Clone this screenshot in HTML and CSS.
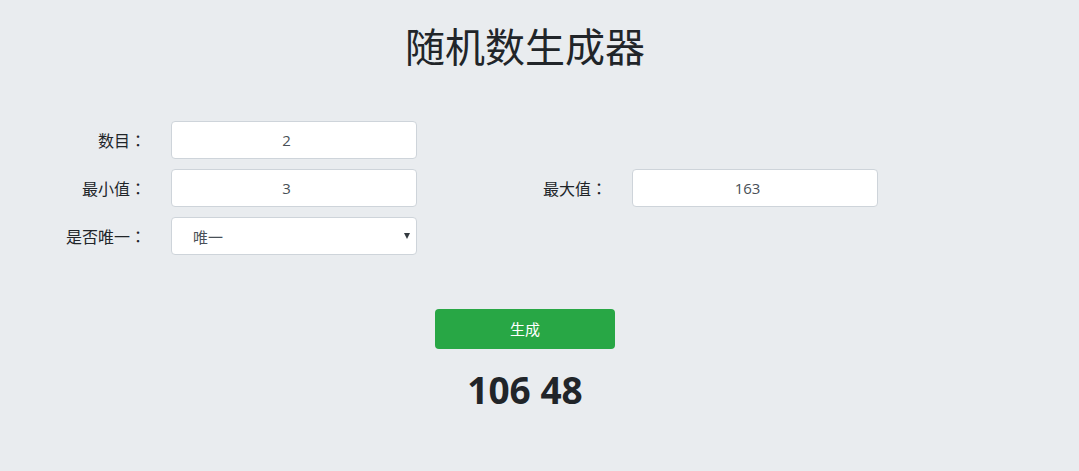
FILE: index.html
```html
<!DOCTYPE html>
<html lang="zh-CN">
<head>
<meta charset="utf-8">
<title>随机数生成器</title>
<link rel="stylesheet" href="styles.css">
</head>
<body>
<div class="page">
  <h1 class="title">随机数生成器</h1>
  <form class="form">
    <label class="label" for="count">数目<span class="colon" lang="ja">：</span></label>
    <input class="field" id="count" type="text" value="2">
    <span class="spacer"></span>
    <span class="spacer"></span>

    <label class="label" for="min">最小值<span class="colon" lang="ja">：</span></label>
    <input class="field" id="min" type="text" value="3">
    <label class="label" for="max">最大值<span class="colon" lang="ja">：</span></label>
    <input class="field" id="max" type="text" value="163">

    <label class="label" for="unique">是否唯一<span class="colon" lang="ja">：</span></label>
    <span class="select-wrap">
      <select class="field select" id="unique">
        <option>唯一</option>
        <option>不唯一</option>
      </select>
    </span>
  </form>
  <div class="actions">
    <button class="btn" type="button">生成</button>
  </div>
  <div class="result">106 48</div>
</div>
</body>
</html>
```
FILE: styles.css
```css
html, body {
  margin: 0;
  padding: 0;
  background: #e9ecef;
}
body {
  font-family: "Open Sans", "Noto Sans CJK SC", sans-serif;
  color: #212529;
}
.page {
  width: 1050px;
  padding-top: 21px;
  text-align: center;
}
.title {
  margin: 0;
  font-family: "Noto Sans CJK SC", sans-serif;
  font-size: 40px;
  font-weight: 400;
  line-height: 48px;
  color: #212529;
}
.form {
  margin-top: 52px;
  display: grid;
  grid-template-columns: 146px 246px 165px 246px;
  grid-auto-rows: 38px;
  column-gap: 25px;
  row-gap: 10px;
  text-align: left;
}
.label {
  align-self: center;
  text-align: right;
  font-family: "Noto Sans CJK SC", sans-serif;
  font-size: 16px;
  line-height: 20px;
  color: #212529;
}
.colon {
  font-family: "Noto Sans CJK JP", sans-serif;
}
.field {
  box-sizing: border-box;
  width: 246px;
  height: 38px;
  margin: 0;
  border: 1px solid #ced4da;
  border-radius: 4px;
  background: #fff;
  font-family: "Open Sans", "Noto Sans CJK SC", sans-serif;
  font-size: 15px;
  color: #495057;
  text-align: center;
  padding: 0 27px 0 12px;
  outline: none;
}
.select-wrap {
  position: relative;
  display: block;
  width: 246px;
  height: 38px;
}
.select {
  -webkit-appearance: none;
  appearance: none;
  text-align: left;
  padding-left: 21px;
  font-family: "Noto Sans CJK SC", sans-serif;
  font-size: 15px;
  color: #495057;
}
.select-wrap::after {
  content: "";
  position: absolute;
  right: 7px;
  top: 16px;
  width: 0;
  height: 0;
  border-left: 3px solid transparent;
  border-right: 3px solid transparent;
  border-top: 6px solid #343a40;
  pointer-events: none;
}
.actions {
  margin-top: 54px;
  display: flex;
  justify-content: center;
}
.btn {
  width: 180px;
  height: 40px;
  border: 0;
  border-radius: 4px;
  background: #28a745;
  color: #fff;
  font-family: "Noto Sans CJK SC", sans-serif;
  font-size: 15px;
  line-height: 20px;
  cursor: pointer;
}
.result {
  margin-top: 19px;
  font-family: "Open Sans", sans-serif;
  font-size: 37px;
  font-weight: 700;
  line-height: 44px;
  color: #212529;
}
```
